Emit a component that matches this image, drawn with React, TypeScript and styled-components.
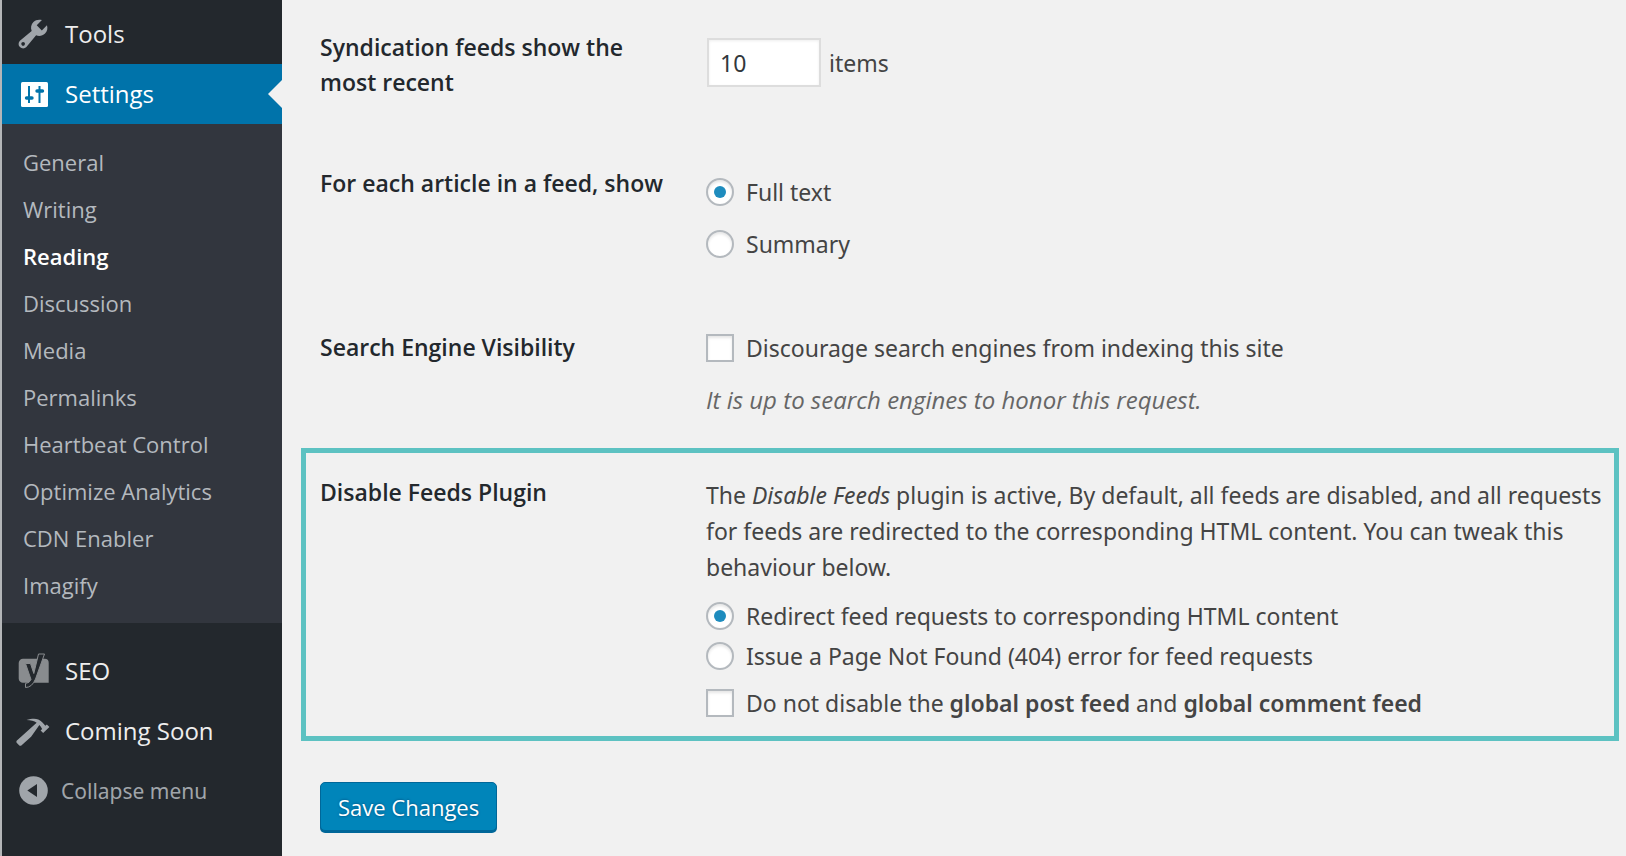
import React, { useState } from "react";
import styled, { createGlobalStyle, css } from "styled-components";

const color = {
  page: "#f1f1f1",
  menu: "#23282d",
  submenu: "#32363e",
  accent: "#0073aa",
  button: "#0085ba",
  buttonEdge: "#006799",
  highlight: "#5dc2c2",
  icon: "#a0a5aa",
  text: "#444",
  heading: "#23282d",
};

const font = {
  body: `"Noto Sans", "Open Sans", sans-serif`,
  label: `"Open Sans", "Noto Sans", sans-serif`,
};

const GlobalStyle = createGlobalStyle`
  *, *::before, *::after { box-sizing: border-box; }
  body {
    margin: 0;
    background: ${color.page};
    color: ${color.text};
    font: 23px/36px ${font.body};
  }
`;

const Page = styled.div`
  display: flex;
  min-height: 100vh;
`;

const Sidebar = styled.nav`
  flex: none;
  width: 282px;
  padding-top: 4px;
  border-left: 2px solid #b4b6b8;
  background: ${color.menu};
  font-family: ${font.label};
`;

const MenuLink = styled.a<{ $current?: boolean }>`
  position: relative;
  display: flex;
  align-items: center;
  gap: 14px;
  height: 60px;
  padding-left: 13px;
  color: #eee;
  font-size: 24px;
  text-decoration: none;

  svg {
    flex: none;
    fill: ${color.icon};
  }

  ${(p) =>
    p.$current &&
    css`
      background: ${color.accent};
      color: #fff;

      svg {
        fill: #fff;
      }

      &::after {
        content: "";
        position: absolute;
        right: 0;
        top: 16px;
        border: 14px solid transparent;
        border-left-width: 0;
        border-right-color: ${color.page};
      }
    `}
`;

const Submenu = styled.ul`
  margin: 0 0 18px;
  padding: 15px 0 14px;
  list-style: none;
  background: ${color.submenu};
`;

const SubmenuLink = styled.a<{ $current: boolean }>`
  display: block;
  padding-left: 21px;
  color: ${(p) => (p.$current ? "#fff" : "#b4b9be")};
  font-size: 22px;
  font-weight: ${(p) => (p.$current ? 600 : 400)};
  line-height: 47px;
  text-decoration: none;
`;

const CollapseButton = styled.button`
  display: flex;
  align-items: center;
  gap: 10px;
  width: 100%;
  height: 60px;
  padding: 0 0 0 13px;
  border: 0;
  background: none;
  color: ${color.icon};
  font: inherit;
  font-family: ${font.body};
  font-size: 21px;

  svg {
    fill: ${color.icon};
  }
`;

const Form = styled.form`
  flex: 1;
  min-width: 0;
  padding: 30px 7px 20px 19px;
`;

const Row = styled.div<{ $after?: number }>`
  display: grid;
  grid-template-columns: 350px minmax(0, 1fr);
  column-gap: 36px;
  padding-left: 19px;
  margin-bottom: ${(p) => p.$after ?? 67}px;
`;

const HighlightedRow = styled(Row)`
  padding: 22px 0 15px 14px;
  border: 5px solid ${color.highlight};
`;

const RowTitle = styled.div`
  color: ${color.heading};
  font-family: ${font.label};
  font-weight: 600;
  line-height: 35px;
`;

const Field = styled.div<{ $top?: number; $gap?: number }>`
  display: flex;
  flex-direction: column;
  align-items: flex-start;
  gap: ${(p) => p.$gap ?? 16}px;
  padding-top: ${(p) => p.$top ?? 0}px;
`;

const InlineField = styled.div`
  display: flex;
  align-items: center;
  gap: 8px;
  padding: 8px 0 0 1px;
  align-self: start;
`;

const NumberInput = styled.input`
  width: 114px;
  height: 49px;
  padding: 0 11px;
  border: 2px solid #ddd;
  background: #fff;
  box-shadow: inset 0 1px 3px rgba(0, 0, 0, 0.07);
  color: #32373c;
  font: inherit;
  appearance: textfield;

  &::-webkit-inner-spin-button {
    appearance: none;
  }
`;

const ChoiceLabel = styled.label`
  display: flex;
  align-items: center;
  gap: 12px;
`;

const Choice = styled.input`
  flex: none;
  display: grid;
  place-items: center;
  width: 28px;
  height: 28px;
  margin: 0;
  border: 2px solid #b4b9be;
  border-radius: ${(p) => (p.type === "radio" ? "50%" : "0")};
  background: #fff;
  box-shadow: inset 0 2px 3px rgba(0, 0, 0, 0.1);
  appearance: none;

  &:checked::before {
    content: "";
    width: 12px;
    height: 12px;
    border-radius: ${(p) => (p.type === "radio" ? "50%" : "0")};
    background: #1e8cbe;
  }
`;

const Description = styled.p`
  margin: 0;
  color: #666;
  font-family: ${font.label};
  font-size: 24px;
  font-style: italic;
`;

const Intro = styled.p`
  margin: 0 0 13px;
`;

const Options = styled.div`
  display: flex;
  flex-direction: column;
  gap: 4px;
  margin-bottom: 11px;
`;

const Strong = styled.strong`
  font-weight: 600;
`;

const SaveButton = styled.button`
  height: 49px;
  margin: 0 0 2px 19px;
  padding: 0 17px;
  border: 1px solid ${color.buttonEdge};
  border-radius: 5px;
  background: ${color.button};
  box-shadow: 0 2px 0 ${color.buttonEdge};
  color: #fff;
  font: inherit;
  font-family: ${font.label};
  font-size: 22px;
  text-shadow: 0 -1px 2px ${color.buttonEdge}, 0 1px 2px ${color.buttonEdge};
`;

const WrenchIcon = () => (
  <svg width="36" height="36" viewBox="0 0 20 20" aria-hidden="true">
    <path d="M16.68 9.77c-1.34 1.34-3.3 1.67-4.95.99l-5.41 6.52c-.99.99-2.59.99-3.58 0s-.99-2.59 0-3.57l6.52-5.42c-.68-1.65-.35-3.61.99-4.95 1.28-1.28 3.12-1.62 4.72-1.06l-2.89 2.89 2.82 2.82 2.86-2.87c.53 1.58.18 3.39-1.08 4.65zM3.81 16.21c.4.39 1.04.39 1.43 0 .4-.4.4-1.04 0-1.43-.39-.4-1.03-.4-1.43 0-.39.39-.39 1.03 0 1.43z" />
  </svg>
);

const SlidersIcon = () => (
  <svg width="36" height="36" viewBox="0 0 36 36" aria-hidden="true">
    <rect x="6" y="6" width="27" height="25" rx="1.5" />
    <g stroke={color.accent} fill="none">
      <path d="M14 10v17M24.5 10v17" strokeWidth="2" />
      <path d="M11.5 22h5.500M22 15h5.500" strokeWidth="3.400" strokeLinecap="round" />
    </g>
  </svg>
);

const YoastIcon = () => (
  <svg width="36" height="36" viewBox="0 0 36 36" aria-hidden="true">
    <path fill="#898c8f" d="M8 5.700h21.700a4 4 0 0 1 4 4v20H8a4.300 4.300 0 0 1-4.300-4.300V10A4.300 4.300 0 0 1 8 5.700z" />
    <path
      fill={color.menu}
      stroke="#898c8f"
      strokeWidth="1"
      d="M23.500 1H29.500L20.500 26Q17 34.500 10.500 34.500V30.500Q14.800 30 16 26.500L10.500 10.500H15.500L18.800 20.500Z"
    />
  </svg>
);

const HammerIcon = () => (
  <svg width="36" height="36" viewBox="0 0 20 20" aria-hidden="true">
    <path d="M17.7 6.32l1.41 1.42-3.47 3.41-1.42-1.42.84-.82c-.32-.76-.81-1.57-1.51-2.31l-4.61 6.59-5.26 4.7c-.39.39-1.02.39-1.42 0l-1.2-1.21c-.39-.39-.39-1.02 0-1.41l10.97-9.92c-1.37-.86-3.21-1.46-5.67-1.48 2.7-.82 4.95-.93 6.58-.3 1.7.66 2.82 2.2 3.91 3.58z" />
  </svg>
);

const CollapseIcon = () => (
  <svg width="36" height="36" viewBox="0 0 36 36" aria-hidden="true">
    <circle cx="18.500" cy="17.500" r="14.300" />
    <path fill={color.menu} d="M12.300 17.500L22 11v13z" />
  </svg>
);

const pages = [
  "General",
  "Writing",
  "Reading",
  "Discussion",
  "Media",
  "Permalinks",
  "Heartbeat Control",
  "Optimize Analytics",
  "CDN Enabler",
  "Imagify",
];

export default function App() {
  const [count, setCount] = useState("10");

  return (
    <>
      <GlobalStyle />
      <Page>
        <Sidebar>
          <MenuLink href="#tools">
            <WrenchIcon />
            Tools
          </MenuLink>
          <MenuLink href="#settings" $current>
            <SlidersIcon />
            Settings
          </MenuLink>
          <Submenu>
            {pages.map((page) => (
              <li key={page}>
                <SubmenuLink href="#settings" $current={page === "Reading"}>
                  {page}
                </SubmenuLink>
              </li>
            ))}
          </Submenu>
          <MenuLink href="#seo">
            <YoastIcon />
            SEO
          </MenuLink>
          <MenuLink href="#coming-soon">
            <HammerIcon />
            Coming Soon
          </MenuLink>
          <CollapseButton type="button">
            <CollapseIcon />
            Collapse menu
          </CollapseButton>
        </Sidebar>

        <Form onSubmit={(e) => e.preventDefault()}>
          <Row $after={66}>
            <RowTitle as="label" htmlFor="feed-count">
              Syndication feeds show the most recent
            </RowTitle>
            <InlineField>
              <NumberInput
                id="feed-count"
                type="number"
                value={count}
                onChange={(e) => setCount(e.target.value)}
              />
              items
            </InlineField>
          </Row>

          <Row $after={68} role="radiogroup" aria-labelledby="feed-content">
            <RowTitle id="feed-content">For each article in a feed, show</RowTitle>
            <Field $top={8}>
              <ChoiceLabel>
                <Choice type="radio" name="feed-content" defaultChecked />
                Full text
              </ChoiceLabel>
              <ChoiceLabel>
                <Choice type="radio" name="feed-content" />
                Summary
              </ChoiceLabel>
            </Field>
          </Row>

          <Row $after={30} role="group" aria-labelledby="visibility">
            <RowTitle id="visibility">Search Engine Visibility</RowTitle>
            <Field>
              <ChoiceLabel>
                <Choice type="checkbox" />
                Discourage search engines from indexing this site
              </ChoiceLabel>
              <Description>It is up to search engines to honor this request.</Description>
            </Field>
          </Row>

          <HighlightedRow $after={41} role="group" aria-labelledby="disable-feeds">
            <RowTitle id="disable-feeds">Disable Feeds Plugin</RowTitle>
            <Field $top={2} $gap={0}>
              <Intro>
                The <em>Disable Feeds</em> plugin is active, By default, all feeds are disabled, and all
                requests for feeds are redirected to the corresponding HTML content. You can tweak this
                behaviour below.
              </Intro>
              <Options>
                <ChoiceLabel>
                  <Choice type="radio" name="feed-requests" defaultChecked />
                  Redirect feed requests to corresponding HTML content
                </ChoiceLabel>
                <ChoiceLabel>
                  <Choice type="radio" name="feed-requests" />
                  Issue a Page Not Found (404) error for feed requests
                </ChoiceLabel>
              </Options>
              <ChoiceLabel>
                <Choice type="checkbox" />
                <span>
                  Do not disable the <Strong>global post feed</Strong> and{" "}
                  <Strong>global comment feed</Strong>
                </span>
              </ChoiceLabel>
            </Field>
          </HighlightedRow>

          <SaveButton type="submit">Save Changes</SaveButton>
        </Form>
      </Page>
    </>
  );
}
